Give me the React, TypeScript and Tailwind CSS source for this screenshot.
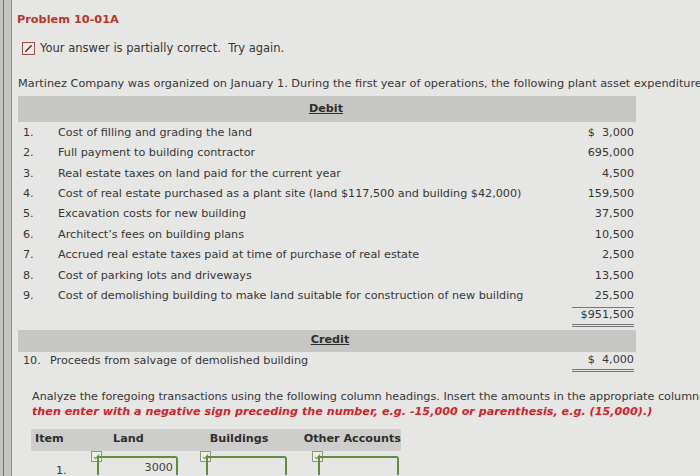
import React from "react";

const rows = [
  ["1.", "Cost of filling and grading the land", "$  3,000"],
  ["2.", "Full payment to building contractor", "695,000"],
  ["3.", "Real estate taxes on land paid for the current year", "4,500"],
  ["4.", "Cost of real estate purchased as a plant site (land $117,500 and building $42,000)", "159,500"],
  ["5.", "Excavation costs for new building", "37,500"],
  ["6.", "Architect\u2019s fees on building plans", "10,500"],
  ["7.", "Accrued real estate taxes paid at time of purchase of real estate", "2,500"],
  ["8.", "Cost of parking lots and driveways", "13,500"],
  ["9.", "Cost of demolishing building to make land suitable for construction of new building", "25,500"],
];

function Check() {
  return (
    <div className="w-[11px] h-[11px] border border-[#8a9a78] bg-[#eef2e6] flex items-center justify-center">
      <svg width="7" height="7" viewBox="0 0 8 8">
        <path d="M1 4.5 L3 6.5 L7 1.5" fill="none" stroke="#7aa05a" strokeWidth="1.3" />
      </svg>
    </div>
  );
}

function InputCell({ value }: { value?: string }) {
  return (
    <div className="flex items-start">
      <Check />
      <div className="mt-[5px] -ml-[5px] w-[81px] h-[19px] border-t-2 border-r-2 border-l-2 border-[#5f8f3e] rounded-tr-[3px] flex items-end justify-end pr-[3px] text-[11.2px] leading-[14px] text-[#444]">
        {value}
      </div>
    </div>
  );
}

export default function App() {
  return (
    <div
      className="w-[700px] h-[476px] overflow-hidden flex bg-[#e6e6e4] text-[#363636]"
      style={{ fontFamily: "'DejaVu Sans', Verdana, sans-serif" }}
    >
      {/* left edge of screen */}
      <div className="w-[12px] shrink-0 flex bg-[#c4c4c2] border-r border-[#8c8c8a]">
        <div className="ml-[3px] w-[1px] bg-[#6e6e6c]" />
      </div>

      <div className="flex-1 min-w-0 pl-[5px] pt-[12px] whitespace-nowrap">
        <div className="text-[11.3px] font-bold text-[#b5392c] leading-[16px]">Problem 10-01A</div>

        <div className="mt-[12px] ml-[5px] flex items-center gap-[5px] text-[11.5px] leading-[16px]">
          <div className="w-[13px] h-[13px] border border-[#a0524a] bg-[#f3eeec] flex items-center justify-center">
            <svg width="9" height="9" viewBox="0 0 10 10">
              <path d="M2 8 L8 2" stroke="#5a2a26" strokeWidth="1.6" strokeLinecap="round" />
            </svg>
          </div>
          <span>Your answer is partially correct.&nbsp; Try again.</span>
        </div>

        <div className="mt-[20px] ml-[1px] text-[11.3px] leading-[16px]">
          Martinez Company was organized on January 1. During the first year of operations, the following plant asset expenditures and receipts were recorded.
        </div>

        {/* Debit section */}
        <div className="mt-[4px] ml-[1px] w-[618px] text-[11.2px]">
          <div className="h-[26px] bg-[#c6c6c4] flex items-center justify-center pr-[2px]">
            <span className="font-bold underline text-[#2e2e2e]">Debit</span>
          </div>
          <div className="pt-[1px]">
            {rows.map(([n, t, a]) => (
              <div key={n} className="h-[20.4px] flex items-center">
                <div className="w-[40px] pl-[5px]">{n}</div>
                <div className="flex-1">{t}</div>
                <div className="w-[64px] text-right pr-[2px] whitespace-pre">{a}</div>
              </div>
            ))}
          </div>
          <div className="flex justify-end">
            <div className="w-[62px] mr-[2px] border-t border-[#777]" />
          </div>
          <div className="h-[16px] flex items-center justify-end pr-[2px]">$951,500</div>
          <div className="flex justify-end">
            <div className="w-[62px] mr-[2px] h-[3px] border-t border-b border-[#777]" />
          </div>

          {/* Credit section */}
          <div className="mt-[3px] h-[22px] bg-[#c6c6c4] flex items-center justify-center pl-[6px]">
            <span className="font-bold underline text-[#2e2e2e]">Credit</span>
          </div>
          <div className="h-[17px] flex items-center">
            <div className="w-[32px] pl-[5px] pt-[2px]">10.</div>
            <div className="flex-1 pt-[3px]">Proceeds from salvage of demolished building</div>
            <div className="w-[64px] text-right pr-[2px] whitespace-pre">$  4,000</div>
          </div>
          <div className="flex justify-end">
            <div className="w-[62px] mr-[2px] h-[3px] border-t border-b border-[#777]" />
          </div>
        </div>

        <div className="mt-[17px] ml-[15px] text-[11.2px] leading-[15px]">
          <div>
            Analyze the foregoing transactions using the following column headings. Insert the amounts in the appropriate columns. If there is no entry for a column, leave the field blank.
          </div>
          <div className="font-bold italic text-[#d4222a]">
            then enter with a negative sign preceding the number, e.g. -15,000 or parenthesis, e.g. (15,000).)
          </div>
        </div>

        {/* Item table */}
        <div className="mt-[10px] ml-[14px] w-[370px] h-[22px] bg-[#cdcdcb] flex items-center text-[11.2px] font-bold text-[#2e2e2e]">
          <div className="w-[83px] pl-[4px]">Item</div>
          <div className="w-[98px]">Land</div>
          <div className="w-[95px]">Buildings</div>
          <div>Other Accounts</div>
        </div>
        <div className="ml-[14px] flex items-start text-[11.2px]">
          <div className="w-[60px] pt-[12px] pl-[25px]">1.</div>
          <div className="w-[109px]"><InputCell value="3000" /></div>
          <div className="w-[112px]"><InputCell /></div>
          <div><InputCell /></div>
        </div>
      </div>
    </div>
  );
}
